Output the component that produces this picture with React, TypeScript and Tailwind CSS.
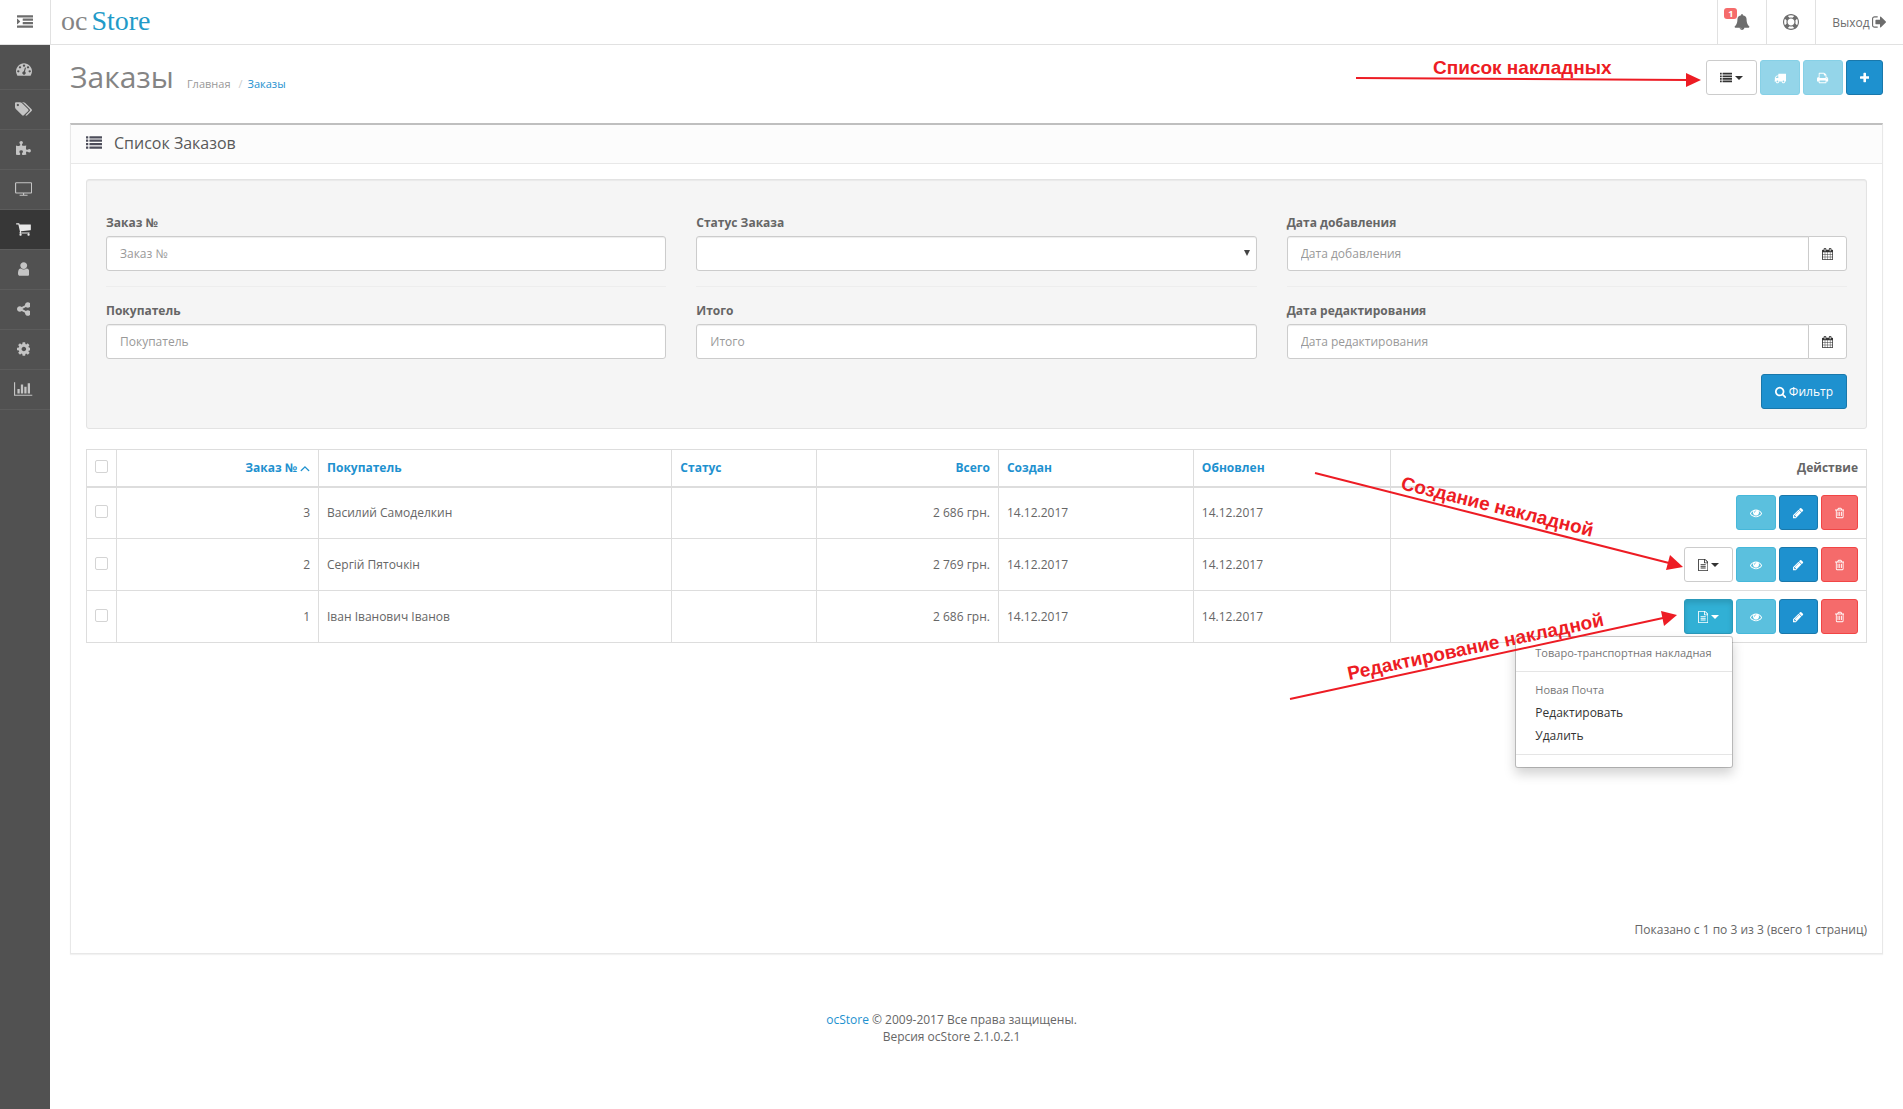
import React, { useState } from 'react';
import clsx from 'clsx';

type IconName = keyof typeof glyphs;

// [viewBox, path]
const glyphs = {
  indent: ['0 0 1792 1792', 'M352 832q0 14-9 23l-288 288q-9 9-23 9-13 0-22.5-9.5t-9.5-22.5v-576q0-13 9.5-22.5t22.5-9.5q14 0 23 9l288 288q9 9 9 23zM32 1280h1728q32 0 32 32v192q0 32-32 32h-1728q-32 0-32-32v-192q0-32 32-32zM672 896h1088q32 0 32 32v192q0 32-32 32h-1088q-32 0-32-32v-192q0-32 32-32zM672 512h1088q32 0 32 32v192q0 32-32 32h-1088q-32 0-32-32v-192q0-32 32-32zM32 128h1728q32 0 32 32v192q0 32-32 32h-1728q-32 0-32-32v-192q0-32 32-32z'],
  list: ['0 0 1792 1792', 'M32 128h192q32 0 32 32v192q0 32-32 32h-192q-32 0-32-32v-192q0-32 32-32zM32 512h192q32 0 32 32v192q0 32-32 32h-192q-32 0-32-32v-192q0-32 32-32zM32 896h192q32 0 32 32v192q0 32-32 32h-192q-32 0-32-32v-192q0-32 32-32zM32 1280h192q32 0 32 32v192q0 32-32 32h-192q-32 0-32-32v-192q0-32 32-32zM416 128h1344q32 0 32 32v192q0 32-32 32h-1344q-32 0-32-32v-192q0-32 32-32zM416 512h1344q32 0 32 32v192q0 32-32 32h-1344q-32 0-32-32v-192q0-32 32-32zM416 896h1344q32 0 32 32v192q0 32-32 32h-1344q-32 0-32-32v-192q0-32 32-32zM416 1280h1344q32 0 32 32v192q0 32-32 32h-1344q-32 0-32-32v-192q0-32 32-32z'],
  dashboard: ['0 0 1792 1792', 'M384 1152q0-53-37.5-90.5t-90.5-37.5-90.5 37.5-37.5 90.5 37.5 90.5 90.5 37.5 90.5-37.5 37.5-90.5zm192-448q0-53-37.5-90.5t-90.5-37.5-90.5 37.5-37.5 90.5 37.5 90.5 90.5 37.5 90.5-37.5 37.5-90.5zm428 481l101-382q6-26-7.5-48.5t-38.5-29.5-48 6.5-30 39.5l-101 382q-60 5-107 43.5t-63 98.5q-20 77 20 146t117 89 146-20 89-117q16-60-6-117t-72-91zm660-33q0-53-37.5-90.5t-90.5-37.5-90.5 37.5-37.5 90.5 37.5 90.5 90.5 37.5 90.5-37.5 37.5-90.5zm-640-640q0-53-37.5-90.5t-90.5-37.5-90.5 37.5-37.5 90.5 37.5 90.5 90.5 37.5 90.5-37.5 37.5-90.5zm448 192q0-53-37.5-90.5t-90.5-37.5-90.5 37.5-37.5 90.5 37.5 90.5 90.5 37.5 90.5-37.5 37.5-90.5zm320 448q0 261-141 483-19 29-54 29h-1402q-35 0-54-29-141-221-141-483 0-182 71-348t191-286 286-191 348-71 348 71 286 191 191 286 71 348z'],
  tags: ['0 0 1920 1792', 'M448 448q0-53-37.5-90.5t-90.5-37.5-90.5 37.5-37.5 90.5 37.5 90.5 90.5 37.5 90.5-37.5 37.5-90.5zm1067 576q0 53-37 90l-491 492q-39 37-91 37-53 0-90-37l-715-716q-38-37-64.5-101t-26.5-117v-416q0-52 38-90t90-38h416q53 0 117 26.5t102 64.5l715 714q37 39 37 91zm384 0q0 53-37 90l-491 492q-39 37-91 37-36 0-59-14t-53-45l470-470q37-37 37-90 0-52-37-91l-715-714q-38-38-102-64.5t-117-26.5h224q53 0 117 26.5t102 64.5l715 714q37 39 37 91z'],
  puzzle: ['64 0 1664 1792', 'M1728 1098q0 81-44.5 135t-123.5 54q-41 0-77.5-17.5t-59-38-56.5-38-71-17.5q-110 0-110 124 0 39 16 115t15 115v5q-22 0-33 1-34 3-97.5 11.5t-115.5 13.5-98 5q-61 0-103-26.5t-42-83.5q0-37 17.5-71t38-56.5 38-59 17.5-77.5q0-79-54-123.5t-135-44.5q-84 0-143 45.5t-59 127.5q0 43 15 83t33.5 64.5 33.5 53 15 50.5q0 45-46 89-37 35-117 35-95 0-245-24-9-2-27.5-4t-27.5-4l-13-2q-1 0-3-1-2 0-2-1v-1024q2 1 17.5 3.5t34 5 21.5 3.5q150 24 245 24 80 0 117-35 46-44 46-89 0-22-15-50.5t-33.5-53-33.5-64.5-15-83q0-82 59-127.5t144-45.5q80 0 134 44.5t54 123.5q0 41-17.5 77.5t-38 59-38 56.5-17.5 71q0 57 42 83.5t103 26.5q64 0 180-15t163-17v2q-1 2-3.5 17.5t-5 34-3.5 21.5q-24 150-24 245 0 80 35 117 44 46 89 46 22 0 50.5-15t53-33.5 64.5-33.5 83-15q82 0 127.5 59t45.5 143z'],
  television: ['0 0 1920 1792', 'M1792 1248v-960q0-13-9.5-22.5t-22.5-9.5h-1600q-13 0-22.5 9.5t-9.5 22.5v960q0 13 9.5 22.5t22.5 9.5h1600q13 0 22.5-9.5t9.5-22.5zm128-960v960q0 66-47 113t-113 47h-736v128h352q14 0 23 9t9 23v64q0 14-9 23t-23 9h-832q-14 0-23-9t-9-23v-64q0-14 9-23t23-9h352v-128h-736q-66 0-113-47t-47-113v-960q0-66 47-113t113-47h1600q66 0 113 47t47 113z'],
  cart: ['64 0 1664 1792', 'M704 1536q0 52-38 90t-90 38-90-38-38-90 38-90 90-38 90 38 38 90zm896 0q0 52-38 90t-90 38-90-38-38-90 38-90 90-38 90 38 38 90zm128-1088v512q0 24-16.5 42.5t-40.5 21.5l-1044 122q13 60 13 70 0 16-24 64h920q26 0 45 19t19 45-19 45-45 19h-1024q-26 0-45-19t-19-45q0-11 8-31.5t16-36 21.5-40 15.5-29.5l-177-823h-204q-26 0-45-19t-19-45 19-45 45-19h256q16 0 28.5 6.5t19.5 15.5 13 24.5 8 26 5.5 29.5 4.5 26h1201q26 0 45 19t19 45z'],
  user: ['256 0 1280 1792', 'M1536 1399q0 109-62.5 187t-150.5 78h-854q-88 0-150.5-78t-62.5-187q0-85 8.5-160.5t31.5-152 58.5-131 94-89 134.5-34.5q131 128 313 128t313-128q76 0 134.5 34.5t94 89 58.5 131 31.5 152 8.5 160.5zm-256-887q0 159-112.5 271.5t-271.5 112.5-271.5-112.5-112.5-271.5 112.5-271.5 271.5-112.5 271.5 112.5 112.5 271.5z'],
  share: ['128 0 1536 1792', 'M1344 1024q133 0 226.5 93.5t93.5 226.5-93.5 226.5-226.5 93.5-226.5-93.5-93.5-226.5q0-12 2-34l-360-180q-92 86-218 86-133 0-226.5-93.5t-93.5-226.5 93.5-226.5 226.5-93.5q126 0 218 86l360-180q-2-22-2-34 0-133 93.5-226.5t226.5-93.5 226.5 93.5 93.5 226.5-93.5 226.5-226.5 93.5q-126 0-218-86l-360 180q2 22 2 34t-2 34l360 180q92-86 218-86z'],
  cog: ['128 0 1536 1792', 'M1152 896q0-106-75-181t-181-75-181 75-75 181 75 181 181 75 181-75 75-181zm512-109v222q0 12-8 23t-20 13l-185 28q-19 54-39 91 35 50 107 138 10 12 10 25t-9 23q-27 37-99 108t-94 71q-12 0-26-9l-138-108q-44 23-91 38-16 136-29 186-7 28-36 28h-222q-14 0-24.5-8.5t-11.5-21.5l-28-184q-49-16-90-37l-141 107q-10 9-25 9-14 0-25-11-126-114-165-168-7-10-7-23 0-12 8-23 15-21 51-66.5t54-70.5q-27-50-41-99l-183-27q-13-2-21-12.5t-8-23.5v-222q0-12 8-23t19-13l186-28q14-46 39-92-40-57-107-138-10-12-10-24 0-10 9-23 26-36 98.5-107.5t94.5-71.5q13 0 26 10l138 107q44-23 91-38 16-136 29-186 7-28 36-28h222q14 0 24.5 8.5t11.5 21.5l28 184q49 16 90 37l142-107q9-9 24-9 13 0 25 10 129 119 165 170 7 8 7 22 0 12-8 23-15 21-51 66.5t-54 70.5q26 50 41 98l183 28q13 2 21 12.5t8 23.5z'],
  chart: ['0 0 2048 1792', 'M640 896v512h-256v-512h256zm384-512v1024h-256v-1024h256zm1024 1152v128h-2048v-1536h128v1408h1920zm-640-896v768h-256v-768h256zm384-384v1152h-256v-1152h256z'],
  bell: ['0 0 1792 1792', 'M912 1696q0-16-16-16-59 0-101.5-42.5t-42.5-101.5q0-16-16-16t-16 16q0 73 51.5 124.5t124.5 51.5q16 0 16-16zm816-288q0 52-38 90t-90 38h-448q0 106-75 181t-181 75-181-75-75-181h-448q-52 0-90-38t-38-90q50-42 91-88t85-119.5 74.5-158.5 50-206 19.5-260q0-152 117-282.5t307-158.5q-8-19-8-39 0-40 28-68t68-28 68 28 28 68q0 20-8 39 190 28 307 158.5t117 282.5q0 139 19.5 260t50 206 74.5 158.5 85 119.5 91 88z'],
  lifeRing: ['0 0 1792 1792', 'M896 0q182 0 348 71t286 191 191 286 71 348-71 348-191 286-286 191-348 71-348-71-286-191-191-286-71-348 71-348 191-286 286-191 348-71zm0 128q-190 0-361 90l194 194q82-28 167-28t167 28l194-194q-171-90-361-90zm-678 1129l194-194q-28-82-28-167t28-167l-194-194q-90 171-90 361t90 361zm678 407q190 0 361-90l-194-194q-82 28-167 28t-167-28l-194 194q171 90 361 90zm0-384q159 0 271.5-112.5t112.5-271.5-112.5-271.5-271.5-112.5-271.5 112.5-112.5 271.5 112.5 271.5 271.5 112.5zm484-217l194 194q90-171 90-361t-90-361l-194 194q28 82 28 167t-28 167z'],
  signOut: ['64 0 1600 1792', 'M704 1440q0 4 1 20t.5 26.5-3 23.5-10 19.5-20.5 6.5h-320q-119 0-203.5-84.5t-84.5-203.5v-704q0-119 84.5-203.5t203.5-84.5h320q13 0 22.5 9.5t9.5 22.5q0 4 1 20t.5 26.5-3 23.5-10 19.5-20.5 6.5h-320q-66 0-113 47t-47 113v704q0 66 47 113t113 47h312l11.5 1 11.5 3 8 5.5 7 9 2 13.5zm928-544q0 26-19 45l-544 544q-19 19-45 19t-45-19-19-45v-288h-448q-26 0-45-19t-19-45v-384q0-26 19-45t45-19h448v-288q0-26 19-45t45-19 45 19l544 544q19 19 19 45z'],
  truck: ['0 0 1792 1792', 'M640 1408q0-52-38-90t-90-38-90 38-38 90 38 90 90 38 90-38 38-90zm-384-512h384v-256h-158q-13 0-22 9l-195 195q-9 9-9 22v30zm1280 512q0-52-38-90t-90-38-90 38-38 90 38 90 90 38 90-38 38-90zm256-1088v1024q0 15-4 26.5t-13.5 18.5-16.5 11.5-23.5 6-22.5 2-25.5 0-22.5-.5q0 106-75 181t-181 75-181-75-75-181h-384q0 106-75 181t-181 75-181-75-75-181h-64q-3 0-22.5.5t-25.5 0-22.5-2-23.5-6-16.5-11.5-13.5-18.5-4-26.5q0-26 19-45t45-19v-320q0-8-.5-35t0-38 2.5-34.5 6.5-37 14-30.5 22.5-30l198-198q19-19 50.5-32t58.5-13h160v-192q0-26 19-45t45-19h1024q26 0 45 19t19 45z'],
  print: ['64 0 1664 1792', 'M448 1536h896v-256h-896v256zm0-640h896v-384h-160q-40 0-68-28t-28-68v-160h-640v640zm1152 64q0-26-19-45t-45-19-45 19-19 45 19 45 45 19 45-19 19-45zm128 0v416q0 13-9.5 22.5t-22.5 9.5h-224v160q0 40-28 68t-68 28h-960q-40 0-68-28t-28-68v-160h-224q-13 0-22.5-9.5t-9.5-22.5v-416q0-79 56.5-135.5t135.5-56.5h64v-544q0-40 28-68t68-28h672q40 0 88 20t76 48l152 152q28 28 48 76t20 88v256h64q79 0 135.5 56.5t56.5 135.5z'],
  plus: ['192 0 1408 1792', 'M1600 736v192q0 40-28 68t-68 28h-416v416q0 40-28 68t-68 28h-192q-40 0-68-28t-28-68v-416h-416q-40 0-68-28t-28-68v-192q0-40 28-68t68-28h416v-416q0-40 28-68t68-28h192q40 0 68 28t28 68v416h416q40 0 68 28t28 68z'],
  calendar: ['64 0 1664 1792', 'M192 1664h288v-288h-288v288zm352 0h320v-288h-320v288zm-352-352h288v-320h-288v320zm352 0h320v-320h-320v320zm-352-384h288v-288h-288v288zm736 736h320v-288h-320v288zm-384-736h320v-288h-320v288zm768 736h288v-288h-288v288zm-384-352h320v-320h-320v320zm-352-864v-288q0-13-9.5-22.5t-22.5-9.5h-64q-13 0-22.5 9.5t-9.5 22.5v288q0 13 9.5 22.5t22.5 9.5h64q13 0 22.5-9.5t9.5-22.5zm736 864h288v-320h-288v320zm-384-384h320v-288h-320v288zm384 0h288v-288h-288v288zm32-480v-288q0-13-9.5-22.5t-22.5-9.5h-64q-13 0-22.5 9.5t-9.5 22.5v288q0 13 9.5 22.5t22.5 9.5h64q13 0 22.5-9.5t9.5-22.5zm384-64v1280q0 52-38 90t-90 38h-1408q-52 0-90-38t-38-90v-1280q0-52 38-90t90-38h128v-96q0-66 47-113t113-47h64q66 0 113 47t47 113v96h384v-96q0-66 47-113t113-47h64q66 0 113 47t47 113v96h128q52 0 90 38t38 90z'],
  search: ['64 0 1664 1792', 'M1216 832q0-185-131.5-316.5t-316.5-131.5-316.5 131.5-131.5 316.5 131.5 316.5 316.5 131.5 316.5-131.5 131.5-316.5zm512 832q0 52-38 90t-90 38q-54 0-90-38l-343-342q-179 124-399 124-143 0-273.5-55.5t-225-150-150-225-55.5-273.5 55.5-273.5 150-225 225-150 273.5-55.5 273.5 55.5 225 150 150 225 55.5 273.5q0 220-124 399l343 343q37 37 37 90z'],
  angleUp: ['340 0 1112 1792', 'M1395 1184q0 13-10 23l-50 50q-10 10-23 10t-23-10l-393-393-393 393q-10 10-23 10t-23-10l-50-50q-10-10-10-23t10-23l466-466q10-10 23-10t23 10l466 466q10 10 10 23z'],
  file: ['128 0 1536 1792', 'M1596 380q28 28 48 76t20 88v1152q0 40-28 68t-68 28h-1344q-40 0-68-28t-28-68v-1600q0-40 28-68t68-28h896q40 0 88 20t76 48zm-444-244v376h376q-10-29-22-41l-313-313q-12-12-41-22zm384 1528v-1024h-416q-40 0-68-28t-28-68v-416h-768v1536h1280zm-1024-864q0-14 9-23t23-9h704q14 0 23 9t9 23v64q0 14-9 23t-23 9h-704q-14 0-23-9t-9-23v-64zm736 224q14 0 23 9t9 23v64q0 14-9 23t-23 9h-704q-14 0-23-9t-9-23v-64q0-14 9-23t23-9h704zm0 256q14 0 23 9t9 23v64q0 14-9 23t-23 9h-704q-14 0-23-9t-9-23v-64q0-14 9-23t23-9h704z'],
  eye: ['0 0 1792 1792', 'M1664 960q-152-236-381-353 61 104 61 225 0 185-131.5 316.5t-316.5 131.5-316.5-131.5-131.5-316.5q0-121 61-225-229 117-381 353 133 205 333.5 326.5t434.5 121.5 434.5-121.5 333.5-326.5zm-720-384q0-20-14-34t-34-14q-125 0-214.5 89.5t-89.5 214.5q0 20 14 34t34 14 34-14 14-34q0-86 61-147t147-61q20 0 34-14t14-34zm848 384q0 34-20 69-140 230-376.5 368.5t-499.5 138.5-499.5-139-376.5-368q-20-35-20-69t20-69q140-229 376.5-368t499.5-139 499.5 139 376.5 368q20 35 20 69z'],
  pencil: ['128 0 1536 1792', 'M491 1536l91-91-235-235-91 91v107h128v128h107zm523-928q0-22-22-22-10 0-17 7l-542 542q-7 7-7 17 0 22 22 22 10 0 17-7l542-542q7-7 7-17zm-54-192l416 416-832 832h-416v-416zm683 96q0 53-37 90l-166 166-416-416 166-165q36-38 90-38 53 0 91 38l235 234q37 39 37 91z'],
  trash: ['192 0 1408 1792', 'M704 736v576q0 14-9 23t-23 9h-64q-14 0-23-9t-9-23v-576q0-14 9-23t23-9h64q14 0 23 9t9 23zm256 0v576q0 14-9 23t-23 9h-64q-14 0-23-9t-9-23v-576q0-14 9-23t23-9h64q14 0 23 9t9 23zm256 0v576q0 14-9 23t-23 9h-64q-14 0-23-9t-9-23v-576q0-14 9-23t23-9h64q14 0 23 9t9 23zm128 724v-948h-896v948q0 22 7 40.5t14.5 27 10.5 8.5h832q3 0 10.5-8.5t14.5-27 7-40.5zm-672-1076h448l-48-117q-7-9-17-11h-317q-10 2-17 11zm928 32v64q0 14-9 23t-23 9h-96v948q0 83-47 143.5t-113 60.5h-832q-66 0-113-58.5t-47-141.5v-952h-96q-14 0-23-9t-9-23v-64q0-14 9-23t23-9h309l70-167q15-37 54-63t79-26h320q40 0 79 26t54 63l70 167h309q14 0 23 9t9 23z'],
} as const;

const Icon: React.FC<{ name: IconName; className?: string }> = ({ name, className = 'h-3' }) => (
  <svg viewBox={glyphs[name][0]} className={clsx('w-auto shrink-0 fill-current', className)} aria-hidden="true">
    <path d={glyphs[name][1]} />
  </svg>
);

const Caret = () => (
  <svg viewBox="0 0 8 4" className="ml-[3px] h-1 w-2 fill-current" aria-hidden="true">
    <path d="M0 0h8L4 4z" />
  </svg>
);

const variants = {
  default: 'border-[#ccc] bg-white text-[#333]',
  primary: 'border-[#1978ab] bg-[#1e91cf] text-white',
  info: 'border-[#46b8da] bg-[#5bc0de] text-white',
  infoActive: 'border-[#2a99ba] bg-[#31b0d5] text-white shadow-[inset_0_3px_5px_rgba(0,0,0,0.125)]',
  danger: 'border-[#f24545] bg-[#f56b6b] text-white',
};

interface ButtonProps extends React.ButtonHTMLAttributes<HTMLButtonElement> {
  variant?: keyof typeof variants;
}

const Button: React.FC<ButtonProps> = ({ variant = 'default', className, ...props }) => (
  <button
    type="button"
    className={clsx('flex h-[35px] items-center justify-center rounded-[3px] border px-[13px] disabled:opacity-65', variants[variant], className)}
    {...props}
  />
);

const menuItems: { icon: IconName; label: string }[] = [
  { icon: 'dashboard', label: 'Панель состояния' },
  { icon: 'tags', label: 'Каталог' },
  { icon: 'puzzle', label: 'Дополнения' },
  { icon: 'television', label: 'Дизайн' },
  { icon: 'cart', label: 'Продажи' },
  { icon: 'user', label: 'Покупатели' },
  { icon: 'share', label: 'Маркетинг' },
  { icon: 'cog', label: 'Система' },
  { icon: 'chart', label: 'Отчеты' },
];

const Header = () => (
  <header className="flex h-[45px] border-b border-[#e1e1e1] bg-white text-[#6d6d6d]">
    <button type="button" aria-label="Меню" className="flex w-[51px] items-center justify-center border-r border-[#e1e1e1]">
      <Icon name="indent" className="h-4" />
    </button>
    <a href="#" className="flex items-center gap-1 px-[10px] pb-[2px] font-['Liberation_Serif',serif] text-[28px] leading-8">
      <span className="text-[#848484]">oc</span>
      <span className="text-[#229ac8]">Store</span>
    </a>
    <nav className="ml-auto flex">
      <a href="#" aria-label="Уведомления" className="relative flex w-[49px] items-center justify-center border-l border-[#e1e1e1]">
        <Icon name="bell" className="h-4" />
        <span className="absolute left-[6px] top-2 flex h-[11px] w-[13px] items-center justify-center rounded-[3px] bg-[#f56b6b] text-[9px] font-bold text-white">1</span>
      </a>
      <a href="#" aria-label="Поддержка" className="flex w-[49px] items-center justify-center border-l border-[#e1e1e1]">
        <Icon name="lifeRing" className="h-4" />
      </a>
      <a href="#" className="flex items-center gap-[2px] border-l border-[#e1e1e1] pl-4 pr-[17px]">
        Выход
        <Icon name="signOut" className="h-4" />
      </a>
    </nav>
  </header>
);

const Sidebar = () => (
  <nav className="w-[50px] shrink-0 bg-[#515151] pt-[5px]">
    <ul>
      {menuItems.map(({ icon, label }) => (
        <li key={icon}>
          <a
            href="#"
            aria-label={label}
            className={clsx(
              'flex h-10 items-center justify-center border-b border-[#5c5c5c] pb-px pr-[3px]',
              icon === 'cart' ? 'bg-[#373737] text-[#e8e8e8]' : 'text-[#c4c4c4]'
            )}
          >
            <Icon name={icon} className="h-4" />
          </a>
        </li>
      ))}
    </ul>
  </nav>
);

const inputClass =
  'h-[35px] w-full min-w-0 rounded-[3px] border border-[#ccc] bg-white px-[13px] text-[#555] shadow-[inset_0_1px_1px_rgba(0,0,0,0.075)] placeholder:text-[#999]';

interface FieldProps {
  id: string;
  label: string;
  type?: 'text' | 'select' | 'date';
}

const Field: React.FC<FieldProps> = ({ id, label, type = 'text' }) => (
  <div>
    <label htmlFor={id} className="mb-[5px] block font-bold">{label}</label>
    {type === 'text' && <input id={id} type="text" placeholder={label} className={inputClass} />}
    {type === 'select' && (
      <div className="relative">
        <select id={id} className={clsx(inputClass, 'appearance-none')}>
          <option></option>
        </select>
        <svg viewBox="0 0 6 6" className="pointer-events-none absolute right-[7px] top-[14px] size-[6px] fill-[#444]" aria-hidden="true">
          <path d="M0 0h6L3 6z" />
        </svg>
      </div>
    )}
    {type === 'date' && (
      <div className="flex">
        <input id={id} type="text" placeholder={label} className={clsx(inputClass, 'rounded-r-none')} />
        <Button aria-label="Выбрать дату" className="-ml-px shrink-0 rounded-l-none">
          <Icon name="calendar" />
        </Button>
      </div>
    )}
  </div>
);

const filterColumns: FieldProps[][] = [
  [
    { id: 'input-order-id', label: 'Заказ №' },
    { id: 'input-customer', label: 'Покупатель' },
  ],
  [
    { id: 'input-order-status', label: 'Статус Заказа', type: 'select' },
    { id: 'input-total', label: 'Итого' },
  ],
  [
    { id: 'input-date-added', label: 'Дата добавления', type: 'date' },
    { id: 'input-date-modified', label: 'Дата редактирования', type: 'date' },
  ],
];

const Filter = () => (
  <form className="mb-5 rounded-[3px] border border-[#e3e3e3] bg-[#f5f5f5] p-[19px] shadow-[inset_0_1px_1px_rgba(0,0,0,0.05)]">
    <div className="grid grid-cols-3 gap-[30px]">
      {filterColumns.map(([first, second]) => (
        <div key={first.id}>
          <div className="py-[15px]">
            <Field {...first} />
          </div>
          <div className="border-t border-[#ededed] py-[15px]">
            <Field {...second} />
          </div>
        </div>
      ))}
    </div>
    <div className="flex justify-end">
      <Button variant="primary" className="gap-[3px]">
        <Icon name="search" />
        Фильтр
      </Button>
    </div>
  </form>
);

const orders = [
  { id: 3, customer: 'Василий Самоделкин', total: '2 686 грн.', added: '14.12.2017', modified: '14.12.2017', waybill: 'none' },
  { id: 2, customer: 'Сергій Пяточкін', total: '2 769 грн.', added: '14.12.2017', modified: '14.12.2017', waybill: 'create' },
  { id: 1, customer: 'Іван Іванович Іванов', total: '2 686 грн.', added: '14.12.2017', modified: '14.12.2017', waybill: 'edit' },
];

const WaybillMenu = () => (
  <div className="absolute right-0 top-full z-10 mt-[2px] w-[218px] rounded-[3px] border border-black/20 bg-white bg-clip-padding py-[5px] text-left shadow-[0_6px_12px_rgba(0,0,0,0.175)]">
    <div className="whitespace-nowrap px-[19px] py-[3px] text-[11px] leading-4 text-[#777]">Товаро-транспортная накладная</div>
    <hr className="my-[7px] border-[#e5e5e5]" />
    <div className="px-[19px] py-[3px] text-[11px] leading-4 text-[#777]">Новая Почта</div>
    <a href="#" className="block px-[19px] py-[3px] text-[#333]">Редактировать</a>
    <a href="#" className="block px-[19px] py-[3px] text-[#333]">Удалить</a>
    <hr className="my-[7px] border-[#e5e5e5]" />
  </div>
);

const Checkbox: React.FC<{ label: string; checked: boolean; onChange: () => void }> = ({ label, checked, onChange }) => (
  <input
    type="checkbox"
    aria-label={label}
    checked={checked}
    onChange={onChange}
    className="mx-auto mb-[2px] block size-[13px] appearance-none rounded-[2px] border border-[#d4d4d4] bg-white checked:bg-[#1e91cf]"
  />
);

const OrdersTable = () => {
  const [selected, setSelected] = useState<number[]>([]);
  const [menuOpen, setMenuOpen] = useState(true);

  const toggle = (id: number) =>
    setSelected(selected.includes(id) ? selected.filter(s => s !== id) : [...selected, id]);
  const allSelected = selected.length === orders.length;

  return (
    <table className="w-full table-fixed border-collapse [&_td]:border [&_td]:border-[#ddd] [&_td]:px-2 [&_th]:border [&_th]:border-b-2 [&_th]:border-[#ddd] [&_th]:px-2">
      <colgroup>
        <col className="w-[30px]" />
        <col className="w-[11.35%]" />
        <col className="w-[19.85%]" />
        <col className="w-[8.1%]" />
        <col className="w-[10.25%]" />
        <col className="w-[10.95%]" />
        <col className="w-[11.05%]" />
        <col />
      </colgroup>
      <thead>
        <tr className="h-[37px] text-left text-[#1e91cf]">
          <th>
            <Checkbox label="Выбрать все" checked={allSelected} onChange={() => setSelected(allSelected ? [] : orders.map(o => o.id))} />
          </th>
          <th>
            <a href="#" className="flex items-center justify-end gap-[3px]">
              Заказ №
              <Icon name="angleUp" className="h-4" />
            </a>
          </th>
          <th><a href="#">Покупатель</a></th>
          <th><a href="#">Статус</a></th>
          <th className="text-right"><a href="#">Всего</a></th>
          <th><a href="#">Создан</a></th>
          <th><a href="#">Обновлен</a></th>
          <th className="text-right text-[#666]">Действие</th>
        </tr>
      </thead>
      <tbody>
        {orders.map(order => (
          <tr key={order.id} className="h-[52px]">
            <td>
              <Checkbox label={`Заказ ${order.id}`} checked={selected.includes(order.id)} onChange={() => toggle(order.id)} />
            </td>
            <td className="text-right">{order.id}</td>
            <td>{order.customer}</td>
            <td></td>
            <td className="text-right">{order.total}</td>
            <td>{order.added}</td>
            <td>{order.modified}</td>
            <td>
              <div className="flex justify-end gap-[3px]">
                {order.waybill === 'create' && (
                  <Button aria-label="Создать накладную">
                    <Icon name="file" />
                    <Caret />
                  </Button>
                )}
                {order.waybill === 'edit' && (
                  <div className="relative">
                    <Button variant="infoActive" aria-label="Редактировать накладную" onClick={() => setMenuOpen(!menuOpen)}>
                      <Icon name="file" />
                      <Caret />
                    </Button>
                    {menuOpen && <WaybillMenu />}
                  </div>
                )}
                <Button variant="info" aria-label="Просмотр"><Icon name="eye" /></Button>
                <Button variant="primary" aria-label="Редактировать"><Icon name="pencil" /></Button>
                <Button variant="danger" aria-label="Удалить"><Icon name="trash" /></Button>
              </div>
            </td>
          </tr>
        ))}
      </tbody>
    </table>
  );
};

// Red callouts pinned to the right side of the page
const Annotations = () => (
  <svg viewBox="0 0 620 720" className="pointer-events-none absolute right-0 top-0 z-20 h-[720px] w-[620px]">
    <g stroke="#ed1c24" strokeWidth="2">
      <path d="M73 78L405 80" />
      <path d="M32 473L386 563" />
      <path d="M7 699L380 618" />
    </g>
    <g fill="#ed1c24">
      <path d="M418 80L403 73V87z" />
      <path d="M400 567L387 555L383 570z" />
      <path d="M394 615L378 611L381 626z" />
    </g>
    <g fill="#ed1c24" className="font-['Liberation_Sans',sans-serif] text-[19px] font-bold">
      <text x="150" y="74">Список накладных</text>
      <text transform="translate(117 489) rotate(14)">Создание накладной</text>
      <text transform="translate(66 680) rotate(-12)">Редактирование накладной</text>
    </g>
  </svg>
);

export default function App() {
  return (
    <div className="relative flex min-h-screen flex-col overflow-x-hidden bg-white font-['Open_Sans',sans-serif] text-[12px] leading-[17px] text-[#666]">
      <Header />
      <div className="flex flex-1">
        <Sidebar />
        <main className="min-w-0 flex-1">
          <div className="flex items-start px-5 pt-[15px]">
            <h1 className="text-[30px] leading-[34px] text-[#848484]">Заказы</h1>
            <ul className="ml-[13px] flex pt-4 text-[11px] leading-4">
              <li><a href="#" className="text-[#999]">Главная</a></li>
              <li className="flex gap-[5px] pl-2 text-[#ccc]">
                /
                <a href="#" className="text-[#1e91cf]">Заказы</a>
              </li>
            </ul>
            <div className="ml-auto flex gap-[3px]">
              <Button aria-label="Список накладных">
                <Icon name="list" />
                <Caret />
              </Button>
              <Button variant="info" aria-label="Список доставки" disabled><Icon name="truck" /></Button>
              <Button variant="info" aria-label="Печать" disabled><Icon name="print" /></Button>
              <Button variant="primary" aria-label="Добавить"><Icon name="plus" /></Button>
            </div>
          </div>

          <section className="mx-5 mt-7 border border-t-2 border-[#e8e8e8] border-t-[#bfbfbf] shadow-[0_1px_1px_rgba(0,0,0,0.05)]">
            <div className="flex h-[39px] items-center gap-3 border-b border-[#e8e8e8] bg-[#fcfcfc] px-[15px] pb-[2px] text-[#4c4d5a]">
              <Icon name="list" className="h-4" />
              <h3 className="text-[16px] leading-5 text-[#595959]">Список Заказов</h3>
            </div>
            <div className="p-[15px]">
              <Filter />
              <div className="min-h-[472px]">
                <OrdersTable />
              </div>
              <p className="text-right">Показано с 1 по 3 из 3 (всего 1 страниц)</p>
            </div>
          </section>

          <footer className="pb-10 pr-[50px] pt-[57px] text-center">
            <a href="#" className="text-[#1e91cf]">ocStore</a> © 2009-2017 Все права защищены.
            <br />
            Версия ocStore 2.1.0.2.1
          </footer>
        </main>
      </div>
      <Annotations />
    </div>
  );
}
